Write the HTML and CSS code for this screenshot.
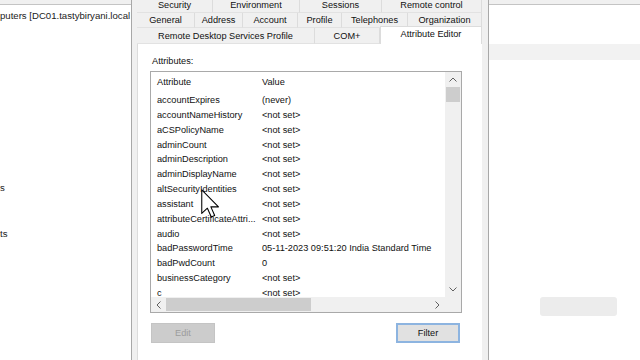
FILE: index.html
```html
<!DOCTYPE html>
<html lang="en">
<head>
    <meta charset="UTF-8">
    <title>Attribute Editor</title>
    <link rel="stylesheet" href="styles.css">
</head>
<body>
    <!-- console tree behind the dialog -->
    <div class="left-pane">
        <div class="strip"></div>
        <div class="tree-title">puters [DC01.tastybiryani.local</div>
        <div class="tree-item item-users">s</div>
        <div class="tree-item item-accounts">ts</div>
    </div>

    <!-- properties dialog -->
    <div class="dialog">
        <div class="tab-row row-top">
            <div class="tab" style="width:76px">Security</div>
            <div class="tab" style="width:87px">Environment</div>
            <div class="tab" style="width:82px">Sessions</div>
            <div class="tab last" style="width:100px">Remote control</div>
        </div>
        <div class="tab-row">
            <div class="tab" style="width:58px">General</div>
            <div class="tab" style="width:48px">Address</div>
            <div class="tab" style="width:55px">Account</div>
            <div class="tab" style="width:44px">Profile</div>
            <div class="tab" style="width:66px">Telephones</div>
            <div class="tab last" style="width:74px">Organization</div>
        </div>
        <div class="tab-row row-front">
            <div class="tab" style="width:178px">Remote Desktop Services Profile</div>
            <div class="tab" style="width:65px">COM+</div>
            <div class="tab selected" style="width:102px">Attribute Editor</div>
        </div>

        <div class="panel">
            <div class="label">Attributes:</div>
            <div class="listbox">
                <div class="list-content">
                    <div class="list-row list-head">
                        <span class="col-attr">Attribute</span>
                        <span class="col-value">Value</span>
                    </div>
                    <div class="list-row"><span class="col-attr">accountExpires</span><span class="col-value">(never)</span></div>
                    <div class="list-row"><span class="col-attr">accountNameHistory</span><span class="col-value">&lt;not set&gt;</span></div>
                    <div class="list-row"><span class="col-attr">aCSPolicyName</span><span class="col-value">&lt;not set&gt;</span></div>
                    <div class="list-row"><span class="col-attr">adminCount</span><span class="col-value">&lt;not set&gt;</span></div>
                    <div class="list-row"><span class="col-attr">adminDescription</span><span class="col-value">&lt;not set&gt;</span></div>
                    <div class="list-row"><span class="col-attr">adminDisplayName</span><span class="col-value">&lt;not set&gt;</span></div>
                    <div class="list-row"><span class="col-attr">altSecurityIdentities</span><span class="col-value">&lt;not set&gt;</span></div>
                    <div class="list-row"><span class="col-attr">assistant</span><span class="col-value">&lt;not set&gt;</span></div>
                    <div class="list-row"><span class="col-attr">attributeCertificateAttri...</span><span class="col-value">&lt;not set&gt;</span></div>
                    <div class="list-row"><span class="col-attr">audio</span><span class="col-value">&lt;not set&gt;</span></div>
                    <div class="list-row"><span class="col-attr">badPasswordTime</span><span class="col-value">05-11-2023 09:51:20 India Standard Time</span></div>
                    <div class="list-row"><span class="col-attr">badPwdCount</span><span class="col-value">0</span></div>
                    <div class="list-row"><span class="col-attr">businessCategory</span><span class="col-value">&lt;not set&gt;</span></div>
                    <div class="list-row"><span class="col-attr">c</span><span class="col-value">&lt;not set&gt;</span></div>
                </div>

                <div class="vscroll">
                    <div class="arrow-box">
                        <svg width="8" height="5" viewBox="0 0 8 5"><polyline points="0.5,4.5 4,1 7.5,4.5" fill="none" stroke="#606060" stroke-width="1"/></svg>
                    </div>
                    <div class="vthumb"></div>
                    <div class="track-fill"></div>
                    <div class="arrow-box">
                        <svg width="8" height="5" viewBox="0 0 8 5"><polyline points="0.5,0.5 4,4 7.5,0.5" fill="none" stroke="#606060" stroke-width="1"/></svg>
                    </div>
                </div>

                <div class="hscroll">
                    <div class="arrow-box wide">
                        <svg width="5" height="8" viewBox="0 0 5 8"><polyline points="4.5,0.5 1,4 4.5,7.5" fill="none" stroke="#606060" stroke-width="1"/></svg>
                    </div>
                    <div class="hthumb"></div>
                    <div class="track-fill"></div>
                    <div class="arrow-box wide">
                        <svg width="5" height="8" viewBox="0 0 5 8"><polyline points="0.5,0.5 4,4 0.5,7.5" fill="none" stroke="#606060" stroke-width="1"/></svg>
                    </div>
                </div>
                <div class="corner"></div>
            </div>

            <div class="button-row">
                <button class="btn" disabled>Edit</button>
                <button class="btn default">Filter</button>
            </div>
        </div>
    </div>

    <!-- window on the right -->
    <div class="right-pane">
        <div class="strip"></div>
        <div class="band"></div>
        <div class="ghost-button"></div>
    </div>

    <!-- mouse pointer -->
    <svg class="cursor" width="19" height="29" viewBox="0 0 12.5 19">
        <path d="M0.5 0.5 V16 L4.2 12.6 L6.8 18.4 L9 17.4 L6.5 11.7 H11.5 Z" fill="#fff" stroke="#000" stroke-width="0.7" stroke-linejoin="round"/>
    </svg>
</body>
</html>
```

FILE: styles.css
```css
/* page */
body {
    margin: 0;
    height: 360px;
    display: flex;
    overflow: hidden;
    background-color: #fff;
    font-family: "Liberation Sans", Arial, sans-serif;
    color: #111;
}

.strip {
    height: 4px;
    background-color: #f0f0f0;
    border-bottom: 1px solid #c4c4c4;
}

/* left console tree */
.left-pane {
    width: 131px;
    flex-shrink: 0;
    overflow: hidden;
    white-space: nowrap;
}
.tree-title {
    font-size: 9.6px;
    line-height: 12px;
    margin-top: 5px;
    color: #222;
}
.tree-item {
    font-size: 9.6px;
    line-height: 12px;
    color: #222;
}
.item-users {
    margin-top: 160px;
}
.item-accounts {
    margin-top: 34px;
}

/* dialog */
.dialog {
    width: 358px;
    flex-shrink: 0;
    box-sizing: border-box;
    background-color: #f0f0f0;
    border-left: 1px solid #a8a8a8;
    border-right: 1px solid #a8a8a8;
    padding: 0 6px 0 5px;
    display: flex;
    flex-direction: column;
    font-size: 9.2px;
}
.tab-row {
    display: flex;
    height: 15px;
}
.row-top {
    margin-top: -2px;
}
.row-front {
    height: 16px;
    position: relative;
    z-index: 1;
}
.tab {
    box-sizing: border-box;
    text-align: center;
    line-height: 15px;
    border-right: 1px solid #dcdcdc;
    border-bottom: 1px solid #e2e2e2;
    background-color: #f0f0f0;
    white-space: nowrap;
}
.row-front .tab {
    line-height: 16px;
}
.tab.selected {
    background-color: #fff;
    border: 1px solid #dcdcdc;
    border-bottom: none;
    margin-top: -2px;
    height: 18px;
    line-height: 14px;
}

.panel {
    flex: 1;
    background-color: #fff;
    border-left: 1px solid #dcdcdc;
    padding: 11px 0 0 12px;
}
.label {
    line-height: 12px;
    padding-left: 2px;
}

/* list view */
.listbox {
    margin-top: 4px;
    width: 312px;
    height: 242px;
    box-sizing: border-box;
    border: 1px solid #a9a9a9;
    display: grid;
    grid-template-columns: 1fr 16px;
    grid-template-rows: 1fr 15px;
}
.list-content {
    overflow: hidden;
    white-space: nowrap;
}
.list-row {
    display: flex;
    line-height: 14.85px;
    height: 14.85px;
}
.list-head {
    height: 21px;
    line-height: 20px;
}
.col-attr {
    width: 105px;
    padding-left: 6px;
    flex-shrink: 0;
    overflow: hidden;
}
.col-value {
    flex-shrink: 0;
}

.vscroll {
    background-color: #f0f0f0;
    display: flex;
    flex-direction: column;
}
.hscroll {
    background-color: #f0f0f0;
    display: flex;
}
.corner {
    background-color: #f0f0f0;
}
.arrow-box {
    height: 15px;
    display: flex;
    align-items: center;
    justify-content: center;
}
.arrow-box.wide {
    height: auto;
    width: 15px;
}
.track-fill {
    flex: 1;
}
.vthumb {
    height: 15px;
    margin: 0 1px;
    background-color: #cdcdcd;
}
.hthumb {
    width: 145px;
    margin: 1px 0;
    background-color: #cdcdcd;
}

/* buttons */
.button-row {
    width: 312px;
    display: flex;
    justify-content: space-between;
    margin-top: 10px;
}
.btn {
    width: 64px;
    height: 20px;
    margin: 0 1px;
    font-family: "Liberation Sans", Arial, sans-serif;
    font-size: 9.2px;
    color: #111;
    background-color: #e1e1e1;
    border: 1px solid #adadad;
    padding: 0;
}
.btn:disabled {
    background-color: #cccccc;
    border-color: #c4c4c4;
    color: #9c9c9c;
}
.btn.default {
    margin-right: 2px;
    border: 2px solid #8db4e0;
}

/* right window */
.right-pane {
    flex: 1;
    display: flex;
    flex-direction: column;
}
.band {
    margin-top: 39px;
    height: 16px;
    background-color: #f2f2f2;
}
.ghost-button {
    margin: 237px 0 0 51px;
    width: 77px;
    height: 19px;
    border-radius: 3px;
    background-color: #ececec;
}

/* pointer drawn over the list */
.cursor {
    position: absolute;
    left: 201px;
    top: 189px;
}
```
